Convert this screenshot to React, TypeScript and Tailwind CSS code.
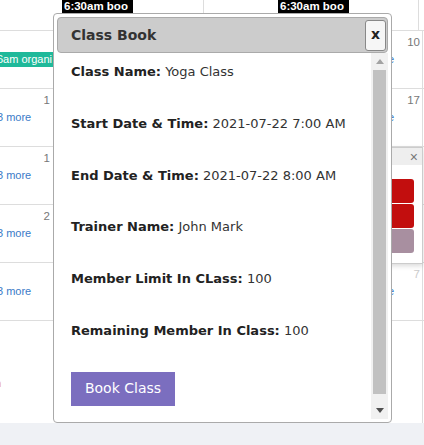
import React from "react";

const num = "text-[11.5px] leading-[13px] text-[#777] text-right h-[18px] pt-[5px]";
const link = "text-[11px] leading-[13px] text-[#3a7bc8] whitespace-nowrap mt-[4px]";

function Row({ left, right, h = "h-[58px]", border = true }: { left?: React.ReactNode; right?: React.ReactNode; h?: string; border?: boolean }) {
  return (
    <div className={`flex ${h} ${border ? "border-b border-[#ddd]" : ""}`}>
      <div className="w-[53px] shrink-0 flex flex-col pr-[3px]">{left}</div>
      <div className="flex-1" />
      <div className="w-[32px] shrink-0 border-r border-[#ddd] flex flex-col pr-[2px]">{right}</div>
      <div className="w-[1px] shrink-0" />
    </div>
  );
}

function Field({ label, value }: { label: string; value: string }) {
  return (
    <p className="text-[13px] leading-[16px] text-[#333] whitespace-nowrap">
      <span className="font-bold text-[#222]">{label}</span> {value}
    </p>
  );
}

export default function App() {
  return (
    <div className="relative w-[424px] h-[445px] overflow-hidden bg-[#eff1f5] font-['Liberation_Sans',Arial,sans-serif]">
      {/* Calendar background */}
      <div className="h-[423px] bg-white flex flex-col">
        <div className="grid grid-cols-[204px_215px_5px] h-[31px] border-b border-[#ddd]">
          <div className="border-r border-[#ddd] h-[13px] flex">
            <div className="ml-[62px] w-[71px] h-[13px] bg-black text-white font-bold text-[11.5px] leading-[13px] px-[2px] overflow-hidden whitespace-nowrap">
              6:30am boo
            </div>
          </div>
          <div className="border-r border-[#ddd] h-[30px] flex">
            <div className="ml-[74px] w-[71px] h-[13px] bg-black text-white font-bold text-[11.5px] leading-[13px] px-[2px] overflow-hidden whitespace-nowrap">
              6:30am boo
            </div>
          </div>
          <div />
        </div>
        <Row
          left={
            <>
              <div className="h-[18px]" />
              <div className="mt-[3px] h-[15px] w-[53px] bg-[#1fb99a] text-white text-[11px] leading-[15px] whitespace-nowrap overflow-hidden">
                <span className="ml-[-3px]">6am organi</span>
              </div>
            </>
          }
          right={
            <>
              <div className={num}>10</div>
              <div className={`${link} ml-[-31px]`}>3 more</div>
            </>
          }
        />
        <Row
          left={
            <>
              <div className={num}>1</div>
              <div className={`${link} ml-[-3px]`}>3 more</div>
            </>
          }
          right={
            <>
              <div className={num}>17</div>
              <div className={`${link} ml-[-31px]`}>3 more</div>
            </>
          }
        />
        <Row
          left={
            <>
              <div className={num}>1</div>
              <div className={`${link} ml-[-3px]`}>3 more</div>
            </>
          }
        />
        <Row
          left={
            <>
              <div className={num}>2</div>
              <div className={`${link} ml-[-3px]`}>3 more</div>
            </>
          }
        />
        <Row
          left={
            <>
              <div className="h-[18px]" />
              <div className={`${link} ml-[-3px]`}>3 more</div>
            </>
          }
          right={
            <>
              <div className={`${num} text-[#ccc]`}>7</div>
              <div className={`${link} ml-[-31px]`}>3 more</div>
            </>
          }
        />
        <Row
          h="flex-1"
          border={false}
          left={
            <div className="mt-[56px] ml-[-5px] text-[11px] leading-[13px] text-[#e67e22]">n</div>
          }
        />
      </div>

      {/* Day popover (partially covered) */}
      <div className="absolute left-[330px] top-[147px] w-[93px] h-[117px] bg-white border border-[#ccc] shadow-[0_2px_5px_rgba(0,0,0,0.15)] flex flex-col">
        <div className="h-[17px] bg-[#eee] flex items-center justify-end pr-[4px] text-[#777] text-[14px] leading-[14px]">×</div>
        <div className="pt-[14px] pr-[8px] flex flex-col gap-[1px]">
          <div className="h-[24px] bg-[#c20e0e] rounded-r-[3px]" />
          <div className="h-[24px] bg-[#c20e0e] rounded-r-[3px]" />
          <div className="h-[24px] bg-[#a88fa0] rounded-r-[3px]" />
        </div>
      </div>

      {/* Modal dialog */}
      <div className="absolute left-[53px] top-[13px] w-[339px] h-[410px] bg-white border border-[#aaa] rounded-[4px] p-[3px] flex flex-col font-['DejaVu_Sans',Verdana,sans-serif]">
        <div className="h-[36px] shrink-0 bg-[#ccc] border border-[#aaa] rounded-[4px] flex items-center justify-between pl-[13px] pr-[1px]">
          <span className="text-[14px] font-bold text-[#333]">Class Book</span>
          <button className="w-[21px] h-[31px] bg-[#f6f6f6] border border-[#888] rounded-[3px] flex items-center justify-center text-[14px] font-bold text-[#222] leading-none pb-[2px]">
            x
          </button>
        </div>
        <div className="flex-1 flex min-h-0">
          <div className="flex-1 pl-[14px] pt-[11px] flex flex-col items-start">
            <div className="flex flex-col gap-[35.8px]">
              <Field label="Class Name:" value="Yoga Class" />
              <Field label="Start Date & Time:" value="2021-07-22 7:00 AM" />
              <Field label="End Date & Time:" value="2021-07-22 8:00 AM" />
              <Field label="Trainer Name:" value="John Mark" />
              <Field label="Member Limit In CLass:" value="100" />
              <Field label="Remaining Member In Class:" value="100" />
            </div>
            <button className="mt-[33px] w-[104px] h-[34px] bg-[#7b6ebf] text-white text-[14px]">Book Class</button>
          </div>
          {/* scrollbar */}
          <div className="w-[17px] shrink-0 bg-[#f1f1f1] flex flex-col">
            <div className="h-[17px] flex items-center justify-center">
              <svg width="8" height="5" viewBox="0 0 8 5"><polygon points="0,5 8,5 4,0" fill="#a3a3a3" /></svg>
            </div>
            <div className="h-[324px] mx-[2px] bg-[#c1c1c1]" />
            <div className="flex-1" />
            <div className="h-[17px] flex items-center justify-center">
              <svg width="8" height="5" viewBox="0 0 8 5"><polygon points="0,0 8,0 4,5" fill="#505050" /></svg>
            </div>
          </div>
        </div>
      </div>
    </div>
  );
}
